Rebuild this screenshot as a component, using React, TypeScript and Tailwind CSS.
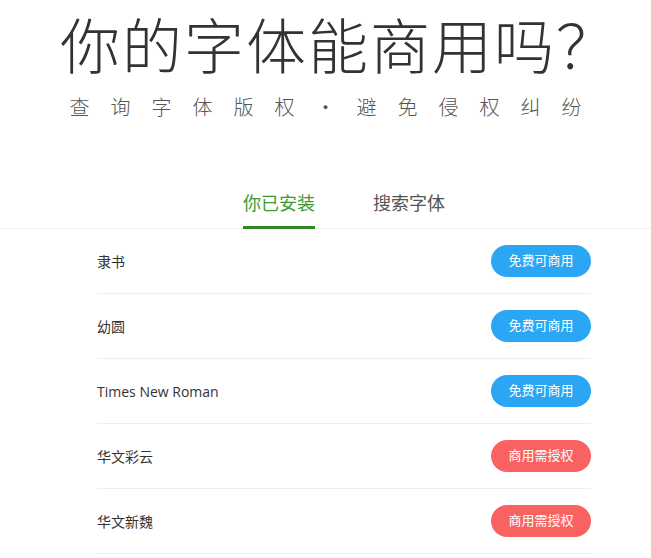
import { useState } from "react";

type Font = { name: string; free: boolean };

const fonts: Font[] = [
  { name: "隶书", free: true },
  { name: "幼圆", free: true },
  { name: "Times New Roman", free: true },
  { name: "华文彩云", free: false },
  { name: "华文新魏", free: false },
];

const tabs = ["你已安装", "搜索字体"];

export default function App() {
  const [active, setActive] = useState(0);

  return (
    <div className="min-h-screen bg-white text-[#333] font-['Open_Sans','Noto_Sans_CJK_SC',sans-serif]">
      <header className="flex flex-col items-center pt-[2px]">
        <h1 className="pl-[27px] text-[60px] leading-[82px] font-light tracking-[2px] text-[#333] font-['Noto_Sans_CJK_SC',sans-serif]">
          你的字体能商用吗？
        </h1>
        <p className="mt-[10px] pl-[21px] text-[20px] leading-[26px] font-light tracking-[21px] text-[#555] font-['Noto_Sans_CJK_SC',sans-serif]">
          查询字体版权<span className="inline-block w-[20px] mr-[21px] tracking-normal text-center">·</span>避免侵权纠纷
        </p>
      </header>

      <nav className="mt-[69px] border-b border-[#f0f0f0]">
        <div className="ml-[97px] w-[494px] flex justify-center gap-[58px]">
          {tabs.map((t, i) => (
            <button
              key={t}
              onClick={() => setActive(i)}
              className={
                "-mb-px pb-[11px] text-[18px] leading-[26px] border-b-[3px] font-['Noto_Sans_CJK_SC',sans-serif] " +
                (active === i ? "text-[#3b9b2e] border-[#2d8a1e]" : "text-[#555] border-transparent")
              }
            >
              {t}
            </button>
          ))}
        </div>
      </nav>

      <ul className="ml-[97px] w-[494px]">
        {fonts.map((f) => (
          <li key={f.name} className="h-[65px] flex items-center justify-between border-b border-[#eeeeee]">
            <span className="text-[14px]">{f.name}</span>
            <span
              className={
                "w-[100px] h-[32px] rounded-full flex items-center justify-center text-[13px] text-white " +
                (f.free ? "bg-[#2ba6f5]" : "bg-[#fa6262]")
              }
            >
              {f.free ? "免费可商用" : "商用需授权"}
            </span>
          </li>
        ))}
      </ul>
    </div>
  );
}
